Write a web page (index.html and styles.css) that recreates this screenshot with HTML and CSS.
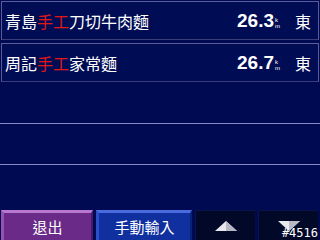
FILE: index.html
```html
<!DOCTYPE html>
<html>
<head>
<meta charset="utf-8">
<link rel="stylesheet" href="styles.css">
</head>
<body>
<div class="screen">
  <div class="list">
    <div class="row item">
      <span class="name">青島<em>手工</em>刀切牛肉麵</span>
      <span class="dist">26.3<span class="unit"><span>k</span><span>m</span></span></span>
      <span class="dir">東</span>
    </div>
    <div class="row item">
      <span class="name">周記<em>手工</em>家常麵</span>
      <span class="dist">26.7<span class="unit"><span>k</span><span>m</span></span></span>
      <span class="dir">東</span>
    </div>
    <div class="row gap"></div>
    <div class="row line"></div>
    <div class="row line"></div>
  </div>
  <div class="bar">
    <div class="btn exit">退出</div>
    <div class="btn manual">手動輸入</div>
    <div class="btn dark"><svg width="22" height="10" viewBox="0 0 22 10"><polygon points="11,0 22,10 0,10" fill="#e8e8ee"/><polygon points="11,0 22,10 11,10" fill="#b8b8c4"/></svg></div>
    <div class="btn dark"><svg width="22" height="10" viewBox="0 0 22 10"><polygon points="0,0 22,0 11,10" fill="#e8e8ee"/><polygon points="11,0 22,0 11,10" fill="#b8b8c4"/></svg><span class="code">#4516</span></div>
  </div>
</div>
</body>
</html>
```
FILE: styles.css
```css
html, body {
  margin: 0;
  padding: 0;
  background: #000850;
}
.screen {
  width: 320px;
  height: 240px;
  display: flex;
  flex-direction: column;
  background: #000a52;
  overflow: hidden;
}
.list {
  display: flex;
  flex-direction: column;
  height: 207px;
}
.row {
  height: 41px;
  box-sizing: border-box;
  flex: none;
}
.gap {
  height: 40px;
}
.item {
  margin: 1px 1px 1px 1px;
  height: 39px;
  border: 1px solid #5c5c98;
  border-bottom-color: #3c3c78;
  background: #000c54;
  display: flex;
  align-items: center;
  padding: 0 7px 0 3px;
  color: #fff;
  font-family: "Noto Sans CJK TC", sans-serif;
}
.item + .item {
  margin-top: 2px;
}
.name {
  flex: 1;
  font-size: 16px;
}
.name em {
  font-style: normal;
  color: #e01818;
}
.dist {
  font-family: "Liberation Sans", Arial, sans-serif;
  font-weight: bold;
  font-size: 19px;
  display: flex;
  align-items: center;
}
.unit {
  display: flex;
  flex-direction: column;
  font-size: 6px;
  line-height: 6px;
  font-weight: normal;
  margin-left: 1px;
  margin-top: 4px;
}
.dir {
  font-size: 16px;
  margin-left: 15px;
}
.line {
  border-top: 1px solid #8a8ac4;
}
.bar {
  display: flex;
  height: 33px;
  gap: 3px;
  padding-left: 1px;
}
.btn {
  height: 30px;
  margin-top: 3px;
  box-sizing: border-box;
  display: flex;
  align-items: center;
  justify-content: center;
  color: #fff;
  font-family: "Noto Sans CJK TC", sans-serif;
  font-size: 15px;
  position: relative;
}
.exit {
  width: 92px;
  background: #6a2a88;
  border-top: 3px solid #b878d0;
  border-left: 3px solid #9850b0;
  border-right: 2px solid #4a1868;
}
.manual {
  width: 96px;
  background: #1030a0;
  border-top: 3px solid #4a6ae0;
  border-left: 3px solid #2a50c8;
  border-right: 2px solid #0a2070;
}
.dark {
  width: 60px;
  background: #010828;
  border-top: 1px solid #0a1448;
  border-left: 1px solid #0a1448;
}
.code {
  position: absolute;
  right: 0;
  bottom: 1px;
  font-family: "DejaVu Sans Mono", monospace;
  font-size: 12px;
  line-height: 12px;
  color: #fff;
}
```
